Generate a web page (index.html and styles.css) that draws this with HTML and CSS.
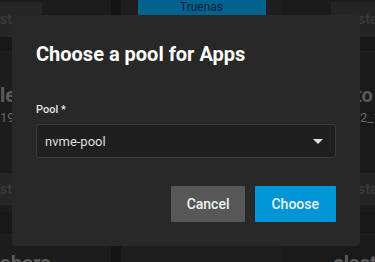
FILE: index.html
```html
<!DOCTYPE html>
<html lang="en">
  <head>
    <meta charset="UTF-8" />
    <meta name="viewport" content="width=device-width, initial-scale=1.0" />
    <title>Choose a pool</title>
    <link rel="stylesheet" href="styles.css">
  </head>
  <body>
    <!-- dimmed app grid behind the dialog -->
    <main class="apps">
      <section class="col col--left">
        <div class="card__head"><span class="chip">sta</span></div>
        <div class="card__strip"></div>
        <div class="card__body">
          <h3 class="app__name">le</h3>
          <p class="app__ver">19</p>
        </div>
        <div class="card__head card__head--short"><span class="chip">st</span></div>
        <div class="card__strip card__strip--tall"></div>
        <div class="card__body"><h3 class="app__name">abora</h3></div>
      </section>

      <section class="col col--mid">
        <span class="badge">Truenas</span>
        <div class="col__fill"></div>
        <div class="col__foot"></div>
      </section>

      <section class="col col--right">
        <div class="card__head"><span class="chip">sta</span></div>
        <div class="card__strip"></div>
        <div class="card__body">
          <h3 class="app__name">to</h3>
          <p class="app__ver">2_1</p>
        </div>
        <div class="card__head card__head--short"><span class="chip">sta</span></div>
        <div class="card__strip card__strip--tall"></div>
        <div class="card__body"><h3 class="app__name">elast</h3></div>
      </section>
    </main>

    <div class="overlay">
      <div class="dialog">
        <h2 class="dialog__title">Choose a pool for Apps</h2>
        <label class="field__label">Pool *</label>
        <div class="select">
          <span class="select__value">nvme-pool</span>
          <span class="select__arrow"></span>
        </div>
        <div class="dialog__actions">
          <button class="btn btn--cancel">Cancel</button>
          <button class="btn btn--primary">Choose</button>
        </div>
      </div>
    </div>
  </body>
</html>
```

FILE: styles.css
```css
* {
  margin: 0;
  padding: 0;
  box-sizing: border-box;
}

body {
  font-family: Roboto, "Liberation Sans", sans-serif;
  background-color: #1b1b1b;
  color: #ddd;
  height: 100vh;
  overflow: hidden;
}

/* ---------- background grid ---------- */

.apps {
  display: flex;
  height: 100%;
  background-color: #141414;
}

.col {
  display: flex;
  flex-direction: column;
  overflow: hidden;
}

.col > * {
  flex-shrink: 0;
}

.col--left {
  width: 111px;
  background-color: #1c1c1c;
}

.col--mid {
  width: 161px;
  margin-left: 10px;
  background-color: #1e1e1e;
  align-items: center;
}

.col--right {
  flex: 1;
  background-color: #1a1a1a;
}

.card__head {
  height: 37px;
  padding-top: 2px;
  display: flex;
}

.card__head--short {
  height: 32px;
  padding-top: 0;
}

.chip {
  width: 42px;
  background-color: #262626;
  color: #383838;
  font-size: 14px;
  font-weight: 700;
  line-height: 35px;
  overflow: hidden;
  white-space: nowrap;
}

.card__head--short .chip {
  line-height: 32px;
}

.col--right .chip {
  width: 44px;
  margin-left: auto;
  padding-left: 27px;
  background-color: #242424;
}

.card__strip {
  height: 15px;
  background-color: #181818;
  border-bottom: 1px solid #202020;
}

.card__strip--tall {
  height: 30px;
  border-top: 7px solid #1c1c1c;
}

.card__body {
  height: 121px;
  padding-top: 31px;
}

.card__body:last-child {
  padding-top: 16px;
}

.col--right .card__body {
  padding-left: 73px;
}

.col--right .card__body:last-child {
  padding-left: 51px;
}

.app__name {
  font-size: 20px;
  font-weight: 700;
  line-height: 24px;
  color: #5b5b5b;
  white-space: nowrap;
}

.app__ver {
  font-size: 13px;
  line-height: 16px;
  color: #686868;
  margin-top: 3px;
  white-space: nowrap;
}

.col--right .app__ver {
  padding-left: 5px;
}

.badge {
  width: 128px;
  height: 15px;
  background-color: #00628f;
  color: #0b2231;
  font-size: 12px;
  line-height: 15px;
  text-align: center;
}

.col__fill {
  flex: 1;
  flex-shrink: 1;
}

.col__foot {
  height: 16px;
}

/* ---------- dialog ---------- */

.overlay {
  position: fixed;
  inset: 0;
  display: flex;
  padding: 15px 15px 16px 12px;
}

.dialog {
  flex: 1;
  display: flex;
  flex-direction: column;
  background-color: #282828;
  border-radius: 4px;
  padding: 24px;
}

.dialog__title {
  font-size: 20px;
  font-weight: 700;
  line-height: 30px;
  color: #fff;
}

.field__label {
  margin-top: 33px;
  font-size: 11px;
  font-weight: 500;
  line-height: 16px;
  color: #e6e6e6;
}

.select {
  margin-top: 6px;
  height: 34px;
  display: flex;
  align-items: center;
  padding: 0 12px 0 8px;
  background-color: #1f1f1f;
  border: 1px solid #3a3a3a;
  border-radius: 3px;
}

.select__value {
  flex: 1;
  font-size: 13px;
  color: #dedede;
}

.select__arrow {
  width: 0;
  height: 0;
  border-left: 5px solid transparent;
  border-right: 5px solid transparent;
  border-top: 5px solid #e0e0e0;
}

.dialog__actions {
  margin-top: 28px;
  display: flex;
  justify-content: flex-end;
  gap: 10px;
}

.btn {
  border: none;
  height: 36px;
  padding: 0 16px;
  font-family: inherit;
  font-size: 14px;
  font-weight: 500;
  color: #eef3f6;
  border-radius: 1px;
  cursor: pointer;
}

.btn--cancel {
  background-color: #575757;
}

.btn--primary {
  background-color: #0095d5;
  padding: 0 17px 0 16px;
}
```
